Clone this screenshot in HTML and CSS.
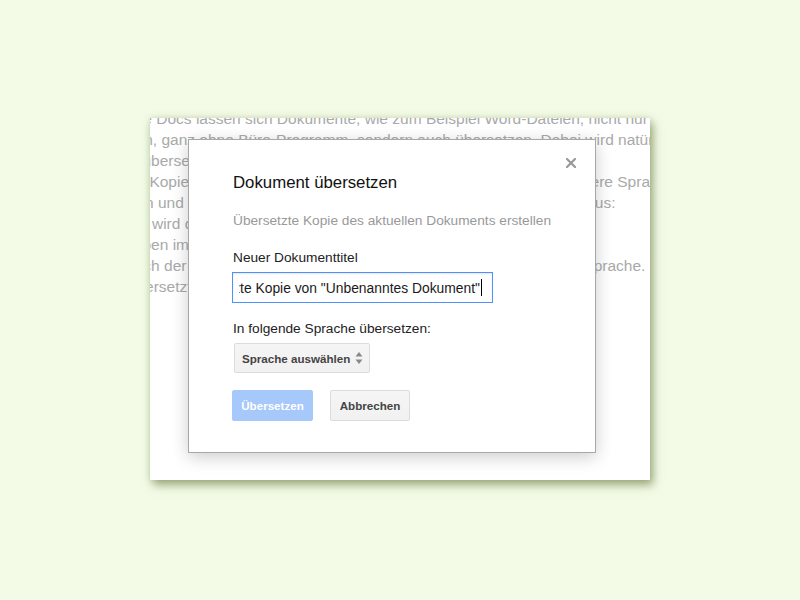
FILE: index.html
```html
<!DOCTYPE html>
<html lang="de">
<head>
    <meta charset="UTF-8">
    <meta name="viewport" content="width=device-width, initial-scale=1.0">
    <title>Dokument übersetzen</title>
    <link rel="stylesheet" href="styles.css">
</head>
<body>
<div class="sheet">
    <!-- Document text behind the dialog -->
    <div class="doc-text">
        <div class="doc-line">Mit Google Docs lassen sich Dokumente, wie zum Beispiel Word-Dateien, nicht nur</div>
        <div class="doc-line">verwenden, ganz ohne Büro-Programm, sondern auch übersetzen. Dabei wird natürlich</div>
        <div class="doc-line">Text wird übersetzt und als neues Dokument gespeichert.</div>
        <div class="doc-line">eine neue Kopie des ganzen Dokuments wird dabei automatisch in die andere Sprache</div>
        <div class="doc-line">übersetzen und eine gewünschte Zielsprache wählen. Der Dialog sieht so aus:</div>
        <div class="doc-line">Dokument wird dabei nicht verändert.</div>
        <div class="doc-line">Fenster oben im Menü auf Tools klicken.</div>
        <div class="doc-line">wird je nach der gewählten Textlänge ein wenig Zeit, in der ausgewählten Sprache.</div>
        <div class="doc-line">Inhalte übersetzt.</div>
    </div>

    <!-- Translate dialog -->
    <div class="dialog">
        <svg class="dialog-close" width="10" height="10" viewBox="0 0 10 10">
            <path d="M1 1L9 9M9 1L1 9" stroke="#999" stroke-width="2.2" stroke-linecap="square"/>
        </svg>
        <h2 class="dialog-title">Dokument übersetzen</h2>
        <p class="dialog-sub">Übersetzte Kopie des aktuellen Dokuments erstellen</p>
        <label class="dialog-label">Neuer Dokumenttitel</label>
        <div class="title-input">
            <div class="title-scroll">
                <span class="title-value">Übersetzte Kopie von "Unbenanntes Dokument"</span><span class="caret"></span>
            </div>
        </div>
        <label class="dialog-label lang-label">In folgende Sprache übersetzen:</label>
        <div class="lang-select">
            <span>Sprache auswählen</span>
            <svg width="8" height="14" viewBox="0 0 8 14">
                <path d="M4 1L7.5 5.5H0.5Z" fill="#888"/>
                <path d="M4 13L7.5 8.5H0.5Z" fill="#888"/>
            </svg>
        </div>
        <div class="dialog-buttons">
            <button class="btn btn-primary">Übersetzen</button>
            <button class="btn">Abbrechen</button>
        </div>
    </div>
</div>
</body>
</html>
```

FILE: styles.css
```css
body {
    margin: 0;
    padding: 0;
    background-color: #f3fbe7;
    font-family: "Liberation Sans", Arial, sans-serif;
    height: 600px;
    overflow: hidden;
}

.sheet {
    position: relative;
    margin: 118px 0 0 150px;
    width: 500px;
    height: 362px;
    background-color: #fff;
    overflow: hidden;
    box-shadow: 3px 5px 9px rgba(110, 128, 70, 0.65), 0 0 6px rgba(150, 170, 110, 0.3);
}

.doc-text {
    margin: -10px 0 0 -73px;
    color: #a9a9a9;
    font-size: 15.5px;
    line-height: 21px;
}

.doc-line {
    white-space: nowrap;
}

.dialog {
    position: absolute;
    left: 38px;
    top: 21px;
    width: 363px;
    height: 279px;
    padding: 33px 0 0 43px;
    background-color: #fff;
    border: 1px solid #a8a8a8;
    box-shadow: 0 4px 16px rgba(0, 0, 0, 0.2);
    display: flex;
    flex-direction: column;
    align-items: flex-start;
}

.dialog-close {
    position: absolute;
    top: 18px;
    right: 19px;
}

.dialog-title {
    margin: 0 0 0 1px;
    font-size: 16.8px;
    font-weight: normal;
    line-height: 20px;
    color: #111;
}

.dialog-sub {
    margin: 19px 0 0 1px;
    font-size: 13.7px;
    line-height: 17px;
    color: #999;
    white-space: nowrap;
}

.dialog-label {
    margin: 20px 0 0 1px;
    font-size: 13.7px;
    line-height: 17px;
    color: #222;
}

.title-input {
    margin-top: 6px;
    width: 261px;
    height: 31px;
    box-sizing: border-box;
    border: 1px solid #4d90fe;
    box-shadow: inset 0 1px 2px rgba(0, 0, 0, 0.1);
    padding: 0 10px 0 6px;
    display: flex;
    align-items: center;
}

.title-scroll {
    flex: 1;
    display: flex;
    justify-content: flex-end;
    align-items: center;
    overflow: hidden;
    white-space: nowrap;
    font-size: 13.85px;
    color: #1a1a1a;
}

.caret {
    display: inline-block;
    width: 1px;
    height: 17px;
    background-color: #000;
    margin-left: 1px;
    flex-shrink: 0;
}

.lang-label {
    margin-top: 17px;
}

.lang-select {
    margin: 6px 0 0 2px;
    width: 136px;
    height: 30px;
    box-sizing: border-box;
    border: 1px solid #dcdcdc;
    border-radius: 2px;
    background: linear-gradient(#f5f5f5, #f1f1f1);
    display: flex;
    align-items: center;
    justify-content: space-between;
    padding: 0 6px 0 7px;
    font-size: 11.6px;
    font-weight: bold;
    color: #444;
}

.dialog-buttons {
    margin-top: 17px;
    display: flex;
    gap: 17px;
}

.btn {
    height: 31px;
    min-width: 80px;
    padding: 0 8px;
    border: 1px solid #dcdcdc;
    border-radius: 2px;
    background: linear-gradient(#f5f5f5, #f1f1f1);
    font-family: "Liberation Sans", Arial, sans-serif;
    font-size: 11.6px;
    font-weight: bold;
    color: #444;
}

.btn-primary {
    min-width: 81px;
    background: #a6c8fa;
    border-color: #a6c8fa;
    color: #fff;
}
```
